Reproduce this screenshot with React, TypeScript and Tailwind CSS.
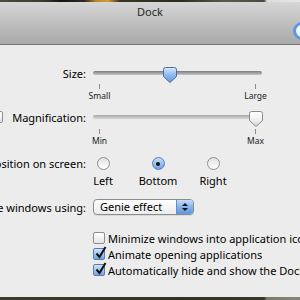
import React from 'react';

const labelCls = 'flex w-[86px] shrink-0 items-center justify-end';

function Thumb({ active }: { active: boolean }) {
  const id = active ? 'thumbBlue' : 'thumbGrey';
  return (
    <svg width="14" height="16" viewBox="0 0 14 16">
      <defs>
        <linearGradient id={id} x1="0" y1="0" x2="0" y2="1">
          {active ? (
            <>
              <stop offset="0" stopColor="#dbe9fb" />
              <stop offset="0.45" stopColor="#94bff2" />
              <stop offset="1" stopColor="#5d98e4" />
            </>
          ) : (
            <>
              <stop offset="0" stopColor="#ffffff" />
              <stop offset="0.5" stopColor="#f2f2f2" />
              <stop offset="1" stopColor="#d6d6d6" />
            </>
          )}
        </linearGradient>
      </defs>
      <path
        d="M2.5 0.5H11.5A2 2 0 0 1 13.5 2.5V9.5L7 15.5L0.5 9.5V2.5A2 2 0 0 1 2.5 0.5Z"
        fill={`url(#${id})`}
        stroke={active ? '#4d6d9a' : '#8a8a8a'}
      />
    </svg>
  );
}

function Slider({
  value,
  active,
  left,
  right,
  tickGap,
}: {
  value: number;
  active: boolean;
  left: string;
  right: string;
  tickGap: string;
}) {
  return (
    <div className="flex w-[169px] flex-col">
      <div className="relative h-[16px]">
        <div
          className={
            active
              ? 'mt-[4px] h-[4px] rounded-full bg-gradient-to-b from-[#7c7c7c] to-[#c6c6c6]'
              : 'mt-[4px] h-[4px] rounded-full bg-gradient-to-b from-[#a9a9a9] to-[#d8d8d8]'
          }
        />
        <div className="absolute top-0" style={{ left: value }}>
          <Thumb active={active} />
        </div>
      </div>
      <div className={`flex justify-between ${tickGap}`}>
        {[left, right].map((t) => (
          <div key={t} className="flex w-[13px] flex-col items-center">
            <div className="h-[5px] w-px bg-[#8c8c8c]" />
            <span className="mt-[2px] whitespace-nowrap text-[8.5px] leading-[10px] text-[#1a1a1a]">{t}</span>
          </div>
        ))}
      </div>
    </div>
  );
}

function Radio({ checked, label }: { checked: boolean; label: string }) {
  return (
    <div className="flex flex-col items-center">
      <div
        className={
          checked
            ? 'flex h-[13px] w-[13px] items-center justify-center rounded-full border border-[#5a7eae] bg-gradient-to-b from-[#c9ddf8] to-[#6ea3e8]'
            : 'h-[13px] w-[13px] rounded-full border border-[#8e8e8e] bg-gradient-to-b from-[#e2e2e2] to-[#ffffff]'
        }
      >
        {checked && <div className="h-[4px] w-[4px] rounded-full bg-[#111]" />}
      </div>
      <span className="mt-[3px] whitespace-nowrap leading-[15px]">{label}</span>
    </div>
  );
}

function Check({ checked }: { checked: boolean }) {
  return (
    <div
      className={
        checked
          ? 'relative h-[12px] w-[12px] shrink-0 rounded-[2px] border border-[#5b7ba8] bg-gradient-to-b from-[#d0e2f8] to-[#72a6e8]'
          : 'relative h-[12px] w-[12px] shrink-0 rounded-[2px] border border-[#8e8e8e] bg-gradient-to-b from-[#ffffff] to-[#e4e4e4]'
      }
    >
      {checked && (
        <svg className="absolute -top-[3px] left-[1px]" width="12" height="13" viewBox="0 0 12 13">
          <path d="M1.5 7.5L4.5 11L10.5 1" fill="none" stroke="#111" strokeWidth="2" />
        </svg>
      )}
    </div>
  );
}

export default function App() {
  return (
    <div className="relative flex h-[300px] w-[300px] flex-col overflow-hidden bg-[#ececec] font-['Noto_Sans',sans-serif] text-[11px] text-black">
      <div className="h-[2px] shrink-0 bg-[linear-gradient(90deg,#4d4c3e_0%,#3b3a2e_15%,#161612_20%,#2a281e_28%,#b9852e_32%,#d39a36_36%,#3a3422_40%,#2e2c22_60%,#5a5a4c_75%,#4a4a3e_88%,#dcdcdc_89%,#e6e6e6_100%)]" />
      <div className="relative h-[43px] shrink-0 border-b border-[#747474] bg-gradient-to-b from-[#d6d6d6] to-[#a9a9a9] pt-[2px] text-center leading-[15px] text-[#262626]">
        Dock
        <div className="absolute left-[293px] top-[20px] h-[18px] w-[22px] rounded-full border-[3px] border-[#5c9be2] bg-gradient-to-b from-[#ffffff] to-[#e4ecf6]" />
      </div>

      <div className="flex flex-1 flex-col">
        <div className="mt-[20px] flex">
          <div className={`${labelCls} h-[16px]`}>
            <span className="shrink-0 whitespace-nowrap leading-[15px]">Size:</span>
          </div>
          <div className="ml-[7px] mt-[2px]">
            <Slider value={70} active left="Small" right="Large" tickGap="mt-[1px]" />
          </div>
        </div>

        <div className="mt-[8px] flex">
          <div className={`${labelCls} h-[16px]`}>
            <div className="flex shrink-0 items-center gap-[9px]">
              <Check checked={false} />
              <span className="whitespace-nowrap leading-[15px]">Magnification:</span>
            </div>
          </div>
          <div className="ml-[7px] mt-[2px]">
            <Slider value={156} active={false} left="Min" right="Max" tickGap="mt-[2px]" />
          </div>
        </div>

        <div className="mt-[11px] flex">
          <div className={`${labelCls} h-[13px]`}>
            <span className="shrink-0 whitespace-nowrap leading-[15px]">Position on screen:</span>
          </div>
          <div className="ml-[-10.5px] grid grid-cols-[55px_55px_55px]">
            <Radio checked={false} label="Left" />
            <Radio checked label="Bottom" />
            <Radio checked={false} label="Right" />
          </div>
        </div>

        <div className="mt-[11px] flex">
          <div className={`${labelCls} h-[16px]`}>
            <span className="shrink-0 whitespace-nowrap leading-[15px]">Minimize windows using:</span>
          </div>
          <div className="ml-[7px] flex h-[16px] w-[101px] overflow-hidden rounded-[4px] border border-[#8d8d8d] bg-gradient-to-b from-[#ffffff] to-[#ececec] shadow-[0_1px_0_rgba(0,0,0,0.08)]">
            <span className="flex-1 pl-[6px] leading-[14px]">Genie effect</span>
            <div className="flex w-[17px] flex-col items-center justify-center gap-[2px] border-l border-[#6d8cb8] bg-gradient-to-b from-[#c7dcf7] via-[#84b2ee] to-[#5e97e2]">
              <svg width="6" height="3" viewBox="0 0 6 3">
                <path d="M0 3L3 0L6 3Z" fill="#111" />
              </svg>
              <svg width="6" height="3" viewBox="0 0 6 3">
                <path d="M0 0L3 3L6 0Z" fill="#111" />
              </svg>
            </div>
          </div>
        </div>

        <div className="ml-[93px] mt-[15px] flex flex-col">
          {[
            { c: false, t: 'Minimize windows into application icon' },
            { c: true, t: 'Animate opening applications' },
            { c: true, t: 'Automatically hide and show the Dock' },
          ].map((r) => (
            <div key={r.t} className="flex h-[16px] items-center gap-[3px]">
              <Check checked={r.c} />
              <span className="whitespace-nowrap leading-[15px]">{r.t}</span>
            </div>
          ))}
        </div>
      </div>

      <div className="h-[3px] shrink-0 bg-[linear-gradient(90deg,#3e3b2f_0%,#35321f_60%,#3a3728_88%,#7f7d72_89%,#86847a_100%)]" />
    </div>
  );
}
